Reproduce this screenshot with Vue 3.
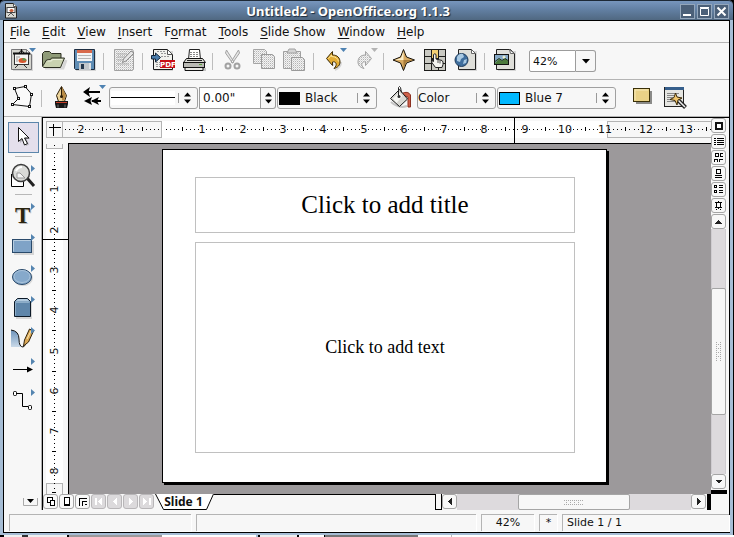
<script setup>
import { ref } from 'vue'

const menus = [
  ['', 'F', 'ile'], ['', 'E', 'dit'], ['', 'V', 'iew'], ['', 'I', 'nsert'], ['F', 'o', 'rmat'],
  ['', 'T', 'ools'], ['', 'S', 'lide Show'], ['', 'W', 'indow'], ['', 'H', 'elp'],
]

const zoom = ref('42%')
const lineWidth = ref('0.00"')
const titleText = 'Click to add title'
const bodyText = 'Click to add text'

const tenth = 4.03
function scale(origin, from, to) {
  const out = []
  for (let k = from; k <= to; k++) {
    if (k === 0) continue
    out.push({
      k,
      pos: Math.round(origin + k * tenth),
      kind: k % 10 === 0 ? 'label' : k % 5 === 0 ? 'half' : 'dot',
      label: Math.abs(k / 10),
    })
  }
  return out
}
const hTicks = scale(99, -24, 136)
const vTicks = scale(5, -1, 85)
</script>

<template>
  <div class="desktop">
    <div class="window">
      <header class="titlebar">
        <svg class="app-icon" width="14" height="16" viewBox="0 0 14 16">
          <path d="M1.500 .5h8l3 3v11.500h-11z" fill="#d8d8d2" stroke="#222" />
          <path d="M9.500 .5v3h3" fill="#fff" stroke="#555" />
          <rect x="3" y="4.500" width="8" height="5" fill="#fff" stroke="#444" />
          <ellipse cx="7.500" cy="7.500" rx="2" ry="1.500" fill="#c8603c" />
          <path d="M4 13l3-3 3 3" fill="none" stroke="#555" />
        </svg>
        <h1>Untitled2 - OpenOffice.org 1.1.3</h1>
        <div class="win-buttons">
          <button aria-label="Minimize"><svg width="13" height="13"><path d="M2 10h8" stroke="#fff" stroke-width="2" /></svg></button>
          <button aria-label="Maximize"><svg width="13" height="13"><path d="M2.500 3.500h8v7h-8zM2 2.500h9" fill="none" stroke="#fff" /></svg></button>
          <button aria-label="Close"><svg width="13" height="13"><path d="M2.500 2.500l8 8M10.500 2.500l-8 8" stroke="#fff" stroke-width="2" /></svg></button>
        </div>
      </header>

      <div class="client">
        <nav class="menubar">
          <button v-for="m in menus" :key="m.join('')">{{ m[0] }}<u>{{ m[1] }}</u>{{ m[2] }}</button>
        </nav>

        <div class="toolbar">
          <button class="tool" aria-label="New">
            <svg width="31" height="32" viewBox="0 0 31 32">
              <path d="M6 6h16l4 4v16H6z" fill="#0002" />
              <path d="M4.500 4.500h15l5 5v15h-20z" fill="#d5d5cf" stroke="#77777a" />
              <path d="M19.500 4.500v5h5z" fill="#fff" stroke="#888" />
              <path d="M14.500 4v4" stroke="#111" />
              <path d="M12 8l2.500-3L17 8" fill="none" stroke="#111" />
              <rect x="7.500" y="8.500" width="14" height="11" fill="#f6f6f4" stroke="#333" />
              <path d="M6 8.500h17" stroke="#111" stroke-width="2" />
              <ellipse cx="15.500" cy="15.500" rx="4" ry="2.500" fill="#d7562f" />
              <path d="M15.500 15.500v-2.500a4 2.500 0 0 1 4 2.500z" fill="#5d9a4d" />
              <path d="M9 12h4M9 14h2M9 16h2" stroke="#999" />
              <path d="M8 23l3-3M20 23l-3-3" stroke="#333" />
              <path d="M22 3h7l-3.500 4z" fill="#4e82b2" />
            </svg>
          </button>
          <button class="tool" aria-label="Open">
            <svg width="31" height="32" viewBox="0 0 31 32">
              <path d="M7 23h18l3-8" fill="none" stroke="#0002" stroke-width="3" />
              <path d="M4.500 21V8.500l2-2h5l2 2h9.500v5" fill="#8f9b78" stroke="#2a2d20" />
              <path d="M4.500 21.500l4-6.500 4-.500 1-1.500h13l-4 9.500H6z" fill="#c9d2b0" stroke="#2a2d20" />
              <path d="M9.500 16h4l1-1.500h10" fill="none" stroke="#eef2df" />
            </svg>
          </button>
          <button class="tool" aria-label="Save">
            <svg width="31" height="32" viewBox="0 0 31 32">
              <path d="M7 6h20v20H7z" fill="#0002" />
              <path d="M5.500 4.500h20v20h-19l-1-1z" fill="#5f8db5" stroke="#1d2d40" />
              <rect x="8" y="5" width="15" height="11" fill="#f4f4f4" />
              <rect x="8" y="5" width="15" height="3" fill="#d8694b" />
              <path d="M9 10.500h13M9 13.500h13" stroke="#b5b5b5" />
              <rect x="10" y="18" width="12" height="7" fill="#c2c7cb" />
              <rect x="12" y="19" width="3" height="5" fill="#25384d" />
              <path d="M21 18v6" stroke="#fff" />
            </svg>
          </button>
          <span class="sep"></span>
          <button class="tool" aria-label="Edit file" disabled>
            <svg width="31" height="32" viewBox="0 0 31 32">
              <defs>
                <pattern id="stipple" width="2" height="2" patternUnits="userSpaceOnUse">
                  <rect width="2" height="2" fill="#f3f3f3" /><rect width="1" height="1" fill="#b4b4b4" /><rect x="1" y="1" width="1" height="1" fill="#d8d8d8" />
                </pattern>
              </defs>
              <path d="M6.500 4.500h18l1 2v18l-1 1h-18z" fill="url(#stipple)" stroke="#a2a2a2" />
              <path d="M9 9h10M9 12h8M9 15h5M9 19h12" stroke="#b0b0b0" />
              <path d="M14.500 17.500l1-3.500L23 6l3 2-8 8z" fill="#e6e6e6" stroke="#8a8a8a" />
            </svg>
          </button>
          <span class="sep"></span>
          <button class="tool" aria-label="Export as PDF">
            <svg width="31" height="32" viewBox="0 0 31 32">
              <path d="M7 6h19v20H7z" fill="#0002" />
              <path d="M6.500 4.500h14l5 5v15h-19z" fill="#f2f2ee" stroke="#1a1a1a" />
              <path d="M20.500 4.500v5h5z" fill="#fff" stroke="#555" />
              <path d="M10 6.500h8M14 8.500h5M14 11.500h9M9 17.500h4M9 19.500h4M9 21.500h4" stroke="#999" stroke-dasharray="2 1" />
              <path d="M4.500 10.500h4v-2.500l5 4.500-5 4.500v-3h-4z" fill="#4a7cab" stroke="#14263a" />
              <rect x="13" y="15" width="15" height="8" fill="#c80f17" />
              <text x="13" y="22" class="pdf">PDF</text>
            </svg>
          </button>
          <button class="tool" aria-label="Print">
            <svg width="31" height="32" viewBox="0 0 31 32">
              <path d="M8 23h20v3H8z" fill="#0003" />
              <path d="M10.500 14.500l1-10h10l1 10z" fill="#fff" stroke="#222" />
              <path d="M12 7.500h8M12 9.500h8M12 11.500h8" stroke="#888" stroke-dasharray="2 1" />
              <path d="M5.500 17.500l3-4h16l3 4z" fill="#dcdcd6" stroke="#111" />
              <path d="M9 15.500h15" stroke="#222" />
              <rect x="5.500" y="17.500" width="21" height="5" fill="#b9b9b4" stroke="#111" />
              <path d="M7 22.500h18v3H7z" fill="#e9e9e5" stroke="#111" />
              <path d="M21 19.500h3" stroke="#5aa33c" />
            </svg>
          </button>
          <span class="sep"></span>
          <button class="tool" aria-label="Cut" disabled>
            <svg width="31" height="32" viewBox="0 0 31 32">
              <path d="M9.500 5l-1 3 7 10 1.500-1zM21.500 5l1 3-7 10-1.500-1z" fill="#e6e6e6" stroke="#a2a2a2" />
              <circle cx="11" cy="21" r="2.500" fill="none" stroke="#a2a2a2" stroke-width="2" />
              <circle cx="20" cy="21" r="2.500" fill="none" stroke="#a2a2a2" stroke-width="2" />
            </svg>
          </button>
          <button class="tool" aria-label="Copy" disabled>
            <svg width="31" height="32" viewBox="0 0 31 32">
              <path d="M5.500 4.500h11l2 2v12h-13z" fill="url(#stipple)" stroke="#a5a5a5" />
              <path d="M13.500 9.500h11l2 2v12h-13z" fill="url(#stipple)" stroke="#9a9a9a" />
            </svg>
          </button>
          <button class="tool" aria-label="Paste" disabled>
            <svg width="31" height="32" viewBox="0 0 31 32">
              <path d="M4.500 6.500h17v17h-17z" fill="url(#stipple)" stroke="#a0a0a0" />
              <path d="M8 8l2-4h6l2 4z" fill="#d4d4d4" stroke="#a0a0a0" />
              <path d="M12.500 12.500h11l2 2v11h-13z" fill="url(#stipple)" stroke="#9a9a9a" />
            </svg>
          </button>
          <span class="sep"></span>
          <button class="tool" aria-label="Undo">
            <svg width="31" height="32" viewBox="0 0 31 32">
              <path d="M10 14.500l6 6M17 25c5-2 6-5 6-8" fill="none" stroke="#0002" stroke-width="2" />
              <path d="M8.500 13.500l6-7v3.500c5 0 7.500 3 7.500 7 0 3-2 5.500-6 6.500 2-2 2.500-3.500 2-5-.5-1.500-2-2-3.500-1.500v3.500z" fill="#e3ac35" stroke="#3c2c08" stroke-linejoin="round" />
              <path d="M10.500 13.500l3-3.500v1.500c4 0 6.500 2 7 5" fill="none" stroke="#fbe7a0" />
              <path d="M22 3h7l-3.500 4z" fill="#4e82b2" />
            </svg>
          </button>
          <button class="tool" aria-label="Redo" disabled>
            <svg width="31" height="32" viewBox="0 0 31 32">
              <path d="M22.500 13.500l-6-7v3.500c-5 0-7.500 3-7.500 7 0 3 2 5.500 6 6.500-2-2-2.500-3.500-2-5 .5-1.500 2-2 3.500-1.500v3.500z" fill="url(#stipple)" stroke="#a2a2a2" stroke-linejoin="round" />
              <path d="M22 3h7l-3.500 4z" fill="#b4b4b4" />
            </svg>
          </button>
          <span class="sep"></span>
          <button class="tool" aria-label="Navigator">
            <svg width="31" height="32" viewBox="0 0 31 32">
              <path d="M15.500 4.500L18.500 12l8 3-8 3-3 7.500-3-7.500-7.500-3 7.500-3z" fill="#d9ab62" stroke="#17120a" />
              <path d="M15.500 6v9H7l6-2z" fill="#fbeec8" />
              <path d="M15.500 24v-9H25l-7 2z" fill="#a87b3a" />
            </svg>
          </button>
          <button class="tool" aria-label="Gallery">
            <svg width="31" height="32" viewBox="0 0 31 32">
              <rect x="5" y="4" width="22" height="22" fill="#1c1c1a" />
              <path d="M6 5h6v6H6zM20 5h6v6h-6zM6 12h6v6H6zM20 12h6v6h-6zM6 19h6v6H6zM13 19h6v6h-6zM20 19h6v6h-6z" fill="#c9c9c2" />
              <path d="M13 5h6v8h-6z" fill="#f3cf73" />
              <path d="M14.500 16.500V9.500q1.500-1.500 2.500 0v4.500l6 1.500q1.500 1 1 4l-1 3h-6.500l-4-5.500q.500-2 2-.500z" fill="#f4f4f0" stroke="#222" />
              <path d="M19 15v3M21 15.500v3" stroke="#555" />
            </svg>
          </button>
          <button class="tool" aria-label="Web page">
            <svg width="31" height="32" viewBox="0 0 31 32">
              <path d="M9 6h18v20H9z" fill="#0002" />
              <path d="M8.500 4.500h13l4 4v16h-17z" fill="#dfdfda" stroke="#222" />
              <path d="M21.500 4.500v4h4z" fill="#fff" stroke="#666" />
              <circle cx="11.500" cy="15" r="6.500" fill="#3f6e9d" stroke="#1f3c5c" />
              <path d="M7 12q2-4 6-3l1 3-3 2-1 3-3-1zM14 15l3-1-1 4-3 1z" fill="#a9c9e2" />
            </svg>
          </button>
          <span class="sep"></span>
          <button class="tool" aria-label="Insert image">
            <svg width="31" height="32" viewBox="0 0 31 32">
              <path d="M9 6h18v20H9z" fill="#0002" />
              <path d="M7.500 4.500h14l4 4v16h-18z" fill="#dfdfda" stroke="#222" />
              <path d="M20.500 4.500l1 4h4z" fill="#fff" stroke="#666" />
              <rect x="5.500" y="9.500" width="14" height="10" fill="#86a9c6" stroke="#111" />
              <path d="M6 18l4-4 3 2 3-3 3 3v3H6z" fill="#4c7a3d" />
              <path d="M6 16.500l4-3 3 2 3-2 3 2" fill="none" stroke="#1f3318" />
              <path d="M15 10l.700 1.500 1.500.500-1.500.700-.700 1.500-.700-1.500-1.500-.700 1.500-.500z" fill="#fffbd0" />
            </svg>
          </button>
          <div class="zoom-combo">
            <input v-model="zoom" aria-label="Zoom" />
            <button aria-label="Zoom list"><svg width="9" height="5"><path d="M1 0h8L5 4.500z" /></svg></button>
          </div>
        </div>

        <div class="toolbar second">
          <button class="tool" aria-label="Edit points">
            <svg width="31" height="32" viewBox="0 0 31 32">
              <path d="M7.500 6.500L18 4.500l6.500 7.500-2 12.500-17-2 6-6z" fill="#fafafa" stroke="#111" />
              <g fill="#fff" stroke="#111">
                <rect x="6.500" y="5.500" width="2" height="2" /><rect x="17.500" y="3.500" width="2" height="2" />
                <rect x="23.500" y="11.500" width="2" height="2" /><rect x="21.500" y="23.500" width="2" height="2" />
                <rect x="4.500" y="21.500" width="2" height="2" /><rect x="10.500" y="15.500" width="2" height="2" />
              </g>
            </svg>
          </button>
          <span class="sep"></span>
          <button class="tool" aria-label="Line">
            <svg width="31" height="32" viewBox="0 0 31 32">
              <path d="M15.500 4.500l-5 9 2 6h6l2-6z" fill="#ecd49a" stroke="#2c1d08" />
              <path d="M16 5l4 8.500-2 5h-2z" fill="#b98b45" />
              <path d="M15.500 5v9" stroke="#2c1d08" />
              <circle cx="15.500" cy="14.500" r="1.500" fill="#2c1d08" />
              <path d="M9 19h13v3l-1 4H10l-1-4z" fill="#161616" />
              <path d="M10 20.500h11" stroke="#c33d28" />
              <path d="M12 22.500v3M19 22.500v3" stroke="#777" />
            </svg>
          </button>
          <button class="tool" aria-label="Arrow style">
            <svg width="31" height="32" viewBox="0 0 31 32">
              <path d="M11 9h12v2H11zM15 18h9v2h-9z" fill="#000" />
              <path d="M6 10l7-5-1.500 5 1.500 5z" fill="#000" />
              <path d="M7 19l8-4-1.500 4 1.500 4z" fill="#000" />
              <path d="M14 19l8-4-2 4 2 4z" fill="#000" />
              <path d="M22 3h7l-3.500 4z" fill="#4e82b2" />
            </svg>
          </button>
          <label class="combo line-style">
            <span class="stroke"></span>
            <select aria-label="Line style"><option value="solid"></option></select>
            <svg class="updown" width="15" height="14"><path d="M.500 2v10" stroke="#999" /><path d="M6 5.500L9.500 1.500 13 5.500zM6 8.500L9.500 12.500 13 8.500z" /></svg>
          </label>
          <div class="number">
            <input v-model="lineWidth" aria-label="Line width" />
            <button aria-label="Change width"><svg width="9" height="14"><path d="M1 5.500L4.500 1.500 8 5.500zM1 8.500L4.500 12.500 8 8.500z" /></svg></button>
          </div>
          <label class="combo line-color">
            <span class="swatch black"></span>
            <select aria-label="Line color"><option>Black</option></select>
            <svg class="updown" width="15" height="14"><path d="M.500 2v10" stroke="#999" /><path d="M6 5.500L9.500 1.500 13 5.500zM6 8.500L9.500 12.500 13 8.500z" /></svg>
          </label>
          <button class="tool area" aria-label="Area">
            <svg width="31" height="32" viewBox="0 0 31 32">
              <path d="M6 20q8 7 16 4" stroke="#0003" stroke-width="2" fill="none" />
              <path d="M17 11.500q6-3 8.500 1.500v12h-2.500v-10l-5-2z" fill="#d0614a" stroke="#8b3020" />
              <path d="M5.500 16.500l9-9 8 9.500-8 7.500z" fill="#d9d9d4" stroke="#1a1a1a" />
              <path d="M8 16.500l6.500-6 3 3.500-6 7z" fill="#f7f7f4" />
              <path d="M13.500 14V5.500q1-2 2 0l1 5" fill="none" stroke="#222" />
              <circle cx="14" cy="14.500" r="1.500" fill="#333" />
            </svg>
          </button>
          <label class="combo fill-type">
            <select aria-label="Area style"><option>Color</option></select>
            <svg class="updown" width="15" height="14"><path d="M.500 2v10" stroke="#999" /><path d="M6 5.500L9.500 1.500 13 5.500zM6 8.500L9.500 12.500 13 8.500z" /></svg>
          </label>
          <label class="combo fill-color">
            <span class="swatch blue"></span>
            <select aria-label="Area filling"><option>Blue 7</option></select>
            <svg class="updown" width="15" height="14"><path d="M.500 2v10" stroke="#999" /><path d="M6 5.500L9.500 1.500 13 5.500zM6 8.500L9.500 12.500 13 8.500z" /></svg>
          </label>
          <button class="tool shadow" aria-label="Shadow">
            <svg width="31" height="32" viewBox="0 0 31 32">
              <rect x="7" y="9" width="16" height="13" fill="#8a8a88" />
              <rect x="4.500" y="6.500" width="16" height="13" fill="#ead287" stroke="#3a3008" />
              <path d="M6 18V8h13" fill="none" stroke="#f7e9b8" />
            </svg>
          </button>
          <button class="tool" aria-label="Stylist">
            <svg width="31" height="32" viewBox="0 0 31 32">
              <rect x="4.500" y="5.500" width="19" height="19" fill="#e6e6e2" stroke="#222" />
              <rect x="5" y="5" width="19" height="3" fill="#365f8c" />
              <path d="M7 11.500h12M7 13.500h7M7 15.500h6M7 17.500h6M7 19.500h8" stroke="#888" />
              <path d="M17 17l8.500 8.500" stroke="#222" stroke-width="4" />
              <path d="M18 18l7 7" stroke="#eee" stroke-width="1.500" />
              <path d="M15.500 11l1.500 4 5 1-4 2-1 5-2-4.500-5-1 4-2z" fill="#f1c66c" stroke="#3b2a0a" />
            </svg>
          </button>
        </div>

        <main class="main">
          <aside class="toolbox">
            <button class="tool selected" aria-label="Select">
              <svg width="31" height="31" viewBox="0 0 31 31">
                <path d="M12 7v14l3-3 3 6 3-1.500-2.500-5.500h4z" fill="#0003" />
                <path d="M10.500 5.500v14l3.500-3 2.500 6.500 3-1.500-3-5.500h4.500z" fill="#fff" stroke="#111" />
              </svg>
            </button>
            <span class="rule"></span>
            <button class="tool" aria-label="Zoom tool">
              <svg width="31" height="31" viewBox="0 0 31 31">
                <path d="M3.500 14v12.500h12V20" fill="#fff" stroke="#000" />
                <path d="M19 18l7 8" stroke="#222" stroke-width="3" />
                <circle cx="13" cy="13" r="8.500" fill="#d9dad7" stroke="#3b3b3b" stroke-width="1.500" />
                <path d="M8 11q2-4 6-4" stroke="#fff" stroke-width="2" fill="none" />
                <path d="M9 13h3l5 5H9z" fill="#f6f6f6" stroke="#999" />
                <path d="M23 5v7l4-3.500z" fill="#5585b0" />
              </svg>
            </button>
            <span class="rule"></span>
            <button class="tool" aria-label="Text tool">
              <svg width="31" height="31" viewBox="0 0 31 31">
                <text x="8" y="26" class="glyph-shadow">T</text>
                <text x="7" y="25" class="glyph">T</text>
                <path d="M23 5v7l4-3.500z" fill="#5585b0" />
              </svg>
            </button>
            <button class="tool" aria-label="Rectangle">
              <svg width="31" height="31" viewBox="0 0 31 31">
                <rect x="6" y="12" width="20" height="14" fill="#0002" />
                <rect x="4.500" y="10.500" width="19" height="13" fill="#7fa3c7" stroke="#2a4a6b" />
                <path d="M5.500 22.500v-11h17" fill="none" stroke="#b7cde0" />
                <path d="M23 5v7l4-3.500z" fill="#5585b0" />
              </svg>
            </button>
            <button class="tool" aria-label="Ellipse">
              <svg width="31" height="31" viewBox="0 0 31 31">
                <ellipse cx="15" cy="18" rx="10" ry="8" fill="#0002" />
                <ellipse cx="14" cy="17" rx="9.500" ry="7.500" fill="#86a9cb" stroke="#2a4a6b" />
                <ellipse cx="14" cy="16.500" rx="8" ry="6" fill="none" stroke="#a9c3da" />
                <path d="M23 5v7l4-3.500z" fill="#5585b0" />
              </svg>
            </button>
            <button class="tool" aria-label="3D objects">
              <svg width="31" height="31" viewBox="0 0 31 31">
                <path d="M8 10h16v18H8z" fill="#0002" />
                <path d="M6.500 10.500l3-3h10l3 3v15h-16z" fill="#5f86aa" stroke="#0d1a28" />
                <path d="M7 10.500l3-2.500h9l3 2.500z" fill="#b3cbdf" />
                <path d="M7.500 24.500v-13h14" fill="none" stroke="#8dadc8" />
                <path d="M23 5v7l4-3.500z" fill="#5585b0" />
              </svg>
            </button>
            <button class="tool" aria-label="Curve">
              <svg width="31" height="31" viewBox="0 0 31 31">
                <defs><linearGradient id="curve-fill" x2="0" y2="1"><stop stop-color="#6d93bb" /><stop offset="1" stop-color="#c9d9e8" /></linearGradient></defs>
                <path d="M3 8q8 1 8 9 0 7 3 8H3z" fill="url(#curve-fill)" />
                <path d="M3 8q8 1 8 9 0 8 4 8 2 0 3-5" fill="none" stroke="#111" />
                <path d="M15.500 24l1-6 5-11 4 2-5 11z" fill="#dba856" stroke="#33240c" />
                <path d="M19 17l4-8" stroke="#fbe8b4" />
                <path d="M23 5v7l4-3.500z" fill="#5585b0" />
              </svg>
            </button>
            <button class="tool" aria-label="Lines and arrows">
              <svg width="31" height="31" viewBox="0 0 31 31">
                <path d="M5 16.500h15" stroke="#000" />
                <path d="M19 13.500v6l6-3z" />
                <path d="M23 5v7l4-3.500z" fill="#5585b0" />
              </svg>
            </button>
            <button class="tool" aria-label="Connectors">
              <svg width="31" height="31" viewBox="0 0 31 31">
                <path d="M9 9.500h5.500v13H20" fill="none" stroke="#000" />
                <rect x="5.500" y="7.500" width="3" height="4" rx="1" fill="#fff" stroke="#000" />
                <rect x="20.500" y="21.500" width="3" height="4" rx="1" fill="#fff" stroke="#000" />
                <path d="M23 5v7l4-3.500z" fill="#5585b0" />
              </svg>
            </button>
            <button class="more" aria-label="More tools"><svg width="15" height="8"><path d="M.500 0v7.500h14V0" fill="none" stroke="#aaa" /><path d="M4 1h7L7.500 5z" /></svg></button>
          </aside>

          <section class="editor">
            <div class="corner"><span><svg width="15" height="15"><path d="M2 5.500h12M6.500 2v12" stroke="#000" /></svg></span></div>
            <div class="hruler">
              <div class="zones"><i class="left"></i><i class="page"></i><i class="right"></i></div>
              <svg class="marks" shape-rendering="crispEdges">
                <template v-for="t in hTicks" :key="t.k">
                  <text v-if="t.kind === 'label'" :x="t.pos" y="15" class="num">{{ t.label }}</text>
                  <rect v-else-if="t.kind === 'half'" :x="t.pos" y="9" width="1" height="4" />
                  <rect v-else :x="t.pos" y="11" width="1" height="1" />
                </template>
                <rect x="451" y="0" width="1" height="25" />
              </svg>
            </div>
            <div class="vruler">
              <div class="zones"><i class="top"></i><i class="page"></i><i class="bottom-zone"></i></div>
              <svg class="marks" shape-rendering="crispEdges">
                <template v-for="t in vTicks" :key="t.k">
                  <text v-if="t.kind === 'label'" class="num" :transform="`translate(15 ${t.pos}) rotate(-90)`">{{ t.label }}</text>
                  <rect v-else-if="t.kind === 'half'" x="9" :y="t.pos" width="4" height="1" />
                  <rect v-else x="11" :y="t.pos" width="1" height="1" />
                </template>
                <rect x="0" y="95" width="25" height="1" />
              </svg>
            </div>
            <div class="canvas">
              <article class="slide">
                <div class="placeholder title">{{ titleText }}</div>
                <div class="placeholder body">{{ bodyText }}</div>
              </article>
            </div>
            <div class="side">
              <button class="mini" aria-label="Drawing view"><svg width="11" height="11"><rect x="3" y="3" width="6" height="6" fill="#fff" stroke="#111" stroke-width="2" /></svg></button>
              <button class="mini" aria-label="Outline view"><svg width="11" height="11"><path d="M4 2.500h7M4 4.500h7M4 6.500h7M4 8.500h7M1 2.500h2M1 4.500h2M1 6.500h2M1 8.500h2" stroke="#000" /></svg></button>
              <button class="mini" aria-label="Slide view"><svg width="11" height="11"><path d="M2.500 1.500h3v3h-3zM10 1.500H7.500v3H10M1 7.500h3.500V10M1.500 7v3M6.500 10V7.500H10" fill="none" stroke="#000" /></svg></button>
              <button class="mini" aria-label="Notes view"><svg width="11" height="11"><path d="M3.500 1.500h4v4h-4zM2 7.500h7M2 9.500h7" fill="none" stroke="#000" /></svg></button>
              <button class="mini" aria-label="Handout view"><svg width="11" height="11"><path d="M1.500 1.500h2v2h-2zM1.500 6.500h2v2h-2zM6 1.500h4M6 3.500h4M6 6.500h4M6 8.500h4" fill="none" stroke="#000" /></svg></button>
              <button class="mini" aria-label="Start slide show"><svg width="11" height="11"><path d="M3.500 2.500h4v5h-4zM2 2.500h7M2 7.500h7M5.500 1v1M3.500 9v1M7.500 9v1M5.500 8v1" fill="none" stroke="#000" /></svg></button>
              <button class="mini" aria-label="Scroll up"><svg width="11" height="11"><path d="M2 7.500L5.500 4 9 7.500z" fill="#222" /></svg></button>
              <div class="track vertical">
                <div class="thumb"><svg width="7" height="19"><path d="M1.500 0v19M5.500 0v19" stroke="#aaa" stroke-dasharray="1 1" /><path d="M3.500 2v16" stroke="#aaa" stroke-dasharray="1 3" /></svg></div>
              </div>
              <button class="mini" aria-label="Scroll down"><svg width="11" height="11"><path d="M2 4L5.500 7.500 9 4z" fill="#222" /></svg></button>
              <span class="split-h"></span>
            </div>
            <div class="bottom">
              <div class="view-buttons">
                <button class="mini" aria-label="Slide mode"><svg width="11" height="11"><path d="M2.500 1.500h5v5h-5z" fill="#fff" stroke="#000" /><path d="M5.500 4.500h4v5h-4z" fill="#fff" stroke="#000" /></svg></button>
                <button class="mini" aria-label="Background mode"><svg width="11" height="11"><path d="M3.500 1.500h5v8h-5zM3 8.500h6" fill="#fff" stroke="#000" /></svg></button>
                <button class="mini" aria-label="Layer mode"><svg width="11" height="11"><path d="M2.500 10V2.500H10M5.500 10V5.500H10M8 8.500h2" fill="none" stroke="#000" /></svg></button>
                <button class="mini off" aria-label="First slide" disabled><svg width="11" height="11"><path d="M3 2v7" stroke="#fff" stroke-width="2" /><path d="M9 1.500v8L5 5.500z" fill="#fff" /></svg></button>
                <button class="mini off" aria-label="Previous slide" disabled><svg width="11" height="11"><path d="M8 1.500v8L3.500 5.500z" fill="#fff" /></svg></button>
                <button class="mini off" aria-label="Next slide" disabled><svg width="11" height="11"><path d="M3.500 1.500v8L8 5.500z" fill="#fff" /></svg></button>
                <button class="mini off" aria-label="Last slide" disabled><svg width="11" height="11"><path d="M9 2v7" stroke="#fff" stroke-width="2" /><path d="M2 1.500v8L6 5.500z" fill="#fff" /></svg></button>
              </div>
              <button class="tab">
                <svg width="59" height="16"><path d="M0 0h59l-7 15.500H8.500z" fill="#fff" /><path d="M.500 0l8 15.500h43L58.500 0" fill="none" stroke="#000" /></svg>
                <span>Slide 1</span>
              </button>
              <div class="tab-space"></div>
              <span class="splitter"></span>
              <button class="mini" aria-label="Scroll left"><svg width="11" height="11"><path d="M7.500 2v7L4 5.500z" fill="#222" /></svg></button>
              <div class="track horizontal">
                <div class="thumb"><svg width="19" height="7"><path d="M0 1.500h19M0 5.500h19" stroke="#aaa" stroke-dasharray="1 1" /><path d="M2 3.500h16" stroke="#aaa" stroke-dasharray="1 3" /></svg></div>
              </div>
              <button class="mini" aria-label="Scroll right"><svg width="11" height="11"><path d="M4 2v7l3.500-3.500z" fill="#222" /></svg></button>
              <span class="split-v"></span>
            </div>
          </section>
        </main>

        <footer class="status">
          <span class="cell position"></span>
          <span class="cell size"></span>
          <span class="cell percent">{{ zoom }}</span>
          <span class="cell star">*</span>
          <span class="cell slide-no">Slide 1 / 1</span>
        </footer>
      </div>
    </div>
    <div class="behind"></div>
  </div>
</template>

<style>
body { background: #000; }
</style>

<style scoped>
* { box-sizing: border-box; }
svg { display: block; flex: none; }
button, input, select {
  font: inherit;
  color: inherit;
  margin: 0;
  padding: 0;
  border: 0;
  border-radius: 0;
  background: none;
  outline: 0;
}
.desktop {
  display: flex;
  flex-direction: column;
  height: 100vh;
  font: 12px "DejaVu Sans", sans-serif;
  color: #111;
  background: #000;
}
.window {
  flex: 1;
  min-height: 0;
  display: flex;
  flex-direction: column;
  margin-right: 1px;
  padding: 0 3px 2px;
  background: #a6bdd5;
  border-radius: 5px 5px 0 0;
}
.titlebar {
  display: flex;
  align-items: center;
  height: 20px;
  margin: 0 -3px;
  padding: 1px 4px 0;
  border-top: 1px solid #1d2936;
  border-radius: 5px 5px 0 0;
  background: linear-gradient(#7796bd, #6482a6 40%, #506881);
}
.titlebar h1 {
  flex: 1;
  margin: 0;
  padding-right: 2px;
  text-align: center;
  font: bold 13px/18px "Noto Sans", sans-serif;
  color: #fff;
  text-shadow: 1px 1px 1px #1c2a3a;
}
.win-buttons { display: flex; gap: 2px; }
.win-buttons button {
  width: 15px;
  height: 15px;
  border: 1px solid #93a6bb;
  background: #4b6079;
}
.client {
  flex: 1;
  min-height: 0;
  display: flex;
  flex-direction: column;
  border: 1px solid #000;
  background: #f7f7f7;
}
.menubar {
  display: flex;
  height: 22px;
  border-bottom: 1px solid #b4b4b4;
}
.menubar button { padding: 0 6px; line-height: 20px; }
.menubar u { text-underline-offset: 2px; }
.toolbar {
  display: flex;
  align-items: center;
  height: 37px;
  padding: 0 3px;
  border-bottom: 1px solid #b4b4b4;
}
.tool { flex: none; width: 31px; }
.sep {
  width: 8px;
  height: 17px;
  border-left: 3px solid transparent;
  background: linear-gradient(90deg, #bdbdbd 1px, transparent 1px) padding-box;
}
.pdf { font: bold 7px "DejaVu Sans", sans-serif; fill: #fff; }
.zoom-combo { display: flex; height: 22px; margin-left: 9px; }
.zoom-combo input {
  width: 47px;
  padding-left: 3px;
  border: 1px solid #9c9c9c;
  border-radius: 2px 0 0 2px;
  background: #fff;
  font-size: 11px;
}
.zoom-combo button, .number button {
  display: grid;
  place-items: center;
  width: 20px;
  border: 1px solid #9c9c9c;
  border-left: 0;
  border-radius: 0 3px 3px 0;
}
.combo {
  display: grid;
  flex: none;
  align-items: center;
  height: 22px;
  border: 1px solid #a0a0a0;
  border-radius: 3px;
}
.combo > * { grid-area: 1 / 1; }
.combo select { appearance: none; width: 100%; height: 20px; }
.updown { justify-self: end; margin-right: 4px; pointer-events: none; }
.swatch { width: 21px; height: 13px; margin-left: 1px; border: 1px solid #000; }
.swatch.black { background: #000; }
.swatch.blue { background: #00b8ff; }
.line-style { width: 89px; margin-left: 1px; }
.stroke { width: 64px; height: 14px; margin-left: 1px; background: linear-gradient(#fff 6px, #000 6px 7px, #fff 7px); }
.line-color { width: 100px; margin-left: 1px; }
.line-color select, .fill-color select { padding-left: 27px; }
.fill-type { width: 79px; }
.fill-color { width: 119px; margin-left: 1px; }
.number { display: flex; flex: none; height: 22px; margin-left: 1px; }
.number input { width: 62px; padding-left: 3px; border: 1px solid #9c9c9c; background: #fff; }
.number button { width: 15px; }
.area { margin: 0 1px 0 8px; }
.shadow { margin-left: 13px; }

.main { flex: 1; min-height: 0; display: flex; }
.toolbox {
  display: flex;
  flex-direction: column;
  align-items: center;
  width: 38px;
  padding: 5px 0 4px 2px;
  border-right: 1px solid #b0b0b0;
}
.toolbox .tool { height: 31px; }
.selected { background: #e4dfec; box-shadow: inset 0 0 0 1px #5b86ab; }
.rule { width: 17px; height: 7px; border-top: 3px solid transparent; background: linear-gradient(#b8b8b8 1px, transparent 1px) padding-box; }
.more { margin: auto 3px 0 auto; }
.glyph, .glyph-shadow { font: bold 23px "Liberation Serif", serif; fill: #2a2410; }
.glyph-shadow { fill: #bbb; }

.editor {
  flex: 1;
  min-width: 0;
  display: grid;
  grid-template: 26px minmax(0, 1fr) 16px / 20px 6px minmax(0, 1fr) 18px;
  border-left: 1px solid #000;
  border-top: 1px solid #000;
}
.corner { grid-area: 1 / 1; padding: 3px 0 0 3px; }
.corner span { display: block; width: 17px; height: 17px; border: 1px solid #b4b4b4; }
.hruler { grid-area: 1 / 2 / 2 / 4; display: grid; overflow: hidden; margin-bottom: 1px; }
.vruler { grid-area: 2 / 1 / 3 / 3; display: grid; overflow: hidden; }
.hruler > *, .vruler > * { grid-area: 1 / 1; }
.marks { width: 100%; height: 100%; }
.hruler .zones { display: flex; height: 17px; margin-top: 3px; }
.vruler .zones { display: flex; flex-direction: column; width: 17px; margin-left: 3px; }
.zones i { border: 0 solid #b4b4b4; }
.zones .page { flex: 1; background: #fff; }
.zones .left { width: 99px; border-width: 1px 1px 1px 0; }
.zones .right { width: 104px; border-width: 1px 0 1px 1px; }
.zones .top { height: 5px; border-width: 0 1px 1px; }
.zones .bottom-zone { height: 11px; border-width: 1px 1px 0; }
.num { font: 11px "DejaVu Sans", sans-serif; text-anchor: middle; fill: #111; stroke: #f9f9f9; stroke-width: 1px; paint-order: stroke; }
.canvas {
  grid-area: 2 / 2 / 3 / 4;
  display: flex;
  margin: -1px 0 0 5px;
  padding: 5px 104px 11px 93px;
  border: solid #000;
  border-width: 1px 0 0 1px;
  background: #9c999b;
}
.slide {
  flex: 1;
  display: flex;
  flex-direction: column;
  gap: 9px;
  padding: 27px 31px 29px 32px;
  border: 1px solid #000;
  background: #fff;
  box-shadow: 2px 2px #000;
  font-family: "Liberation Serif", serif;
  color: #000;
}
.placeholder { display: flex; align-items: center; justify-content: center; border: 1px solid #c0c0c0; }
.title { height: 56px; font-size: 25px; }
.body { flex: 1; font-size: 18px; }

.side { grid-area: 1 / 4 / 3 / 5; display: flex; flex-direction: column; gap: 1px; padding: 0 3px 0 0; min-height: 0; }
.mini {
  display: grid;
  place-items: center;
  flex: none;
  width: 15px;
  height: 15px;
  border: 1px solid #a5a5a5;
  border-radius: 3px;
  background: #f8f8f8;
}
.mini svg { shape-rendering: crispEdges; }
.off { background: #dcdadc; border-color: #b8b6b8; }
.track { flex: 235 0 0; display: flex; background: #dddadd; }
.track::before, .track::after { content: ""; flex: 60; }
.vertical { flex-direction: column; width: 15px; min-height: 0; margin: -1px 0; border: solid #cfccd0; border-width: 0 1px; }
.vertical .thumb { flex: 127; margin: 0 -1px; }
.horizontal .thumb { flex: 108; }
.thumb { display: grid; place-items: center; border: 1px solid #a5a5a5; border-radius: 2px; background: #f7f7f7; }
.split-h { height: 4px; margin-right: -1px; background: #000; }
.bottom { grid-area: 3 / 1 / 4 / 5; display: flex; padding-right: 18px; min-width: 0; }
.view-buttons { display: flex; gap: 1px; padding-right: 1px; }
.tab { display: grid; flex: none; width: 59px; font: bold 12px "Noto Sans", sans-serif; }
.tab > * { grid-area: 1 / 1; }
.tab span { padding-right: 2px; line-height: 16px; }
.tab-space { flex: 221 0 0; border-top: 1px solid #000; }
.splitter { width: 7px; border: 1px solid #000; border-top: 0; background: #f7f7f7; }
.split-v { width: 4px; margin-left: 1px; background: #000; }

.status {
  display: flex;
  gap: 5px;
  height: 22px;
  padding: 4px 0 1px 5px;
  font-size: 11px;
  line-height: 16px;
}
.cell { border: solid #b4b4b4; border-width: 1px 0 0 1px; text-align: center; box-shadow: 1px 1px #fff; }
.position { width: 182px; }
.size { flex: 1; }
.percent { width: 53px; }
.star { width: 18px; }
.cell.slide-no { width: 167px; padding-left: 4px; text-align: left; }
.behind {
  height: 2px;
  background: linear-gradient(90deg, #000 4px, #f0f0f0 4px 22px, #333 22px 28px, #f0f0f0 28px 67px, #000 67px 69px, #9c999b 69px 162px, #fff 162px 256px, #a6bdd5 256px 258px, #000 258px 260px, #eee 260px 297px, #000 297px 299px, #fff 299px 324px, #000 324px 325px, #777 325px 418px, #fff 418px 451px, #bbb 451px 452px, #fff 452px);
}
</style>
